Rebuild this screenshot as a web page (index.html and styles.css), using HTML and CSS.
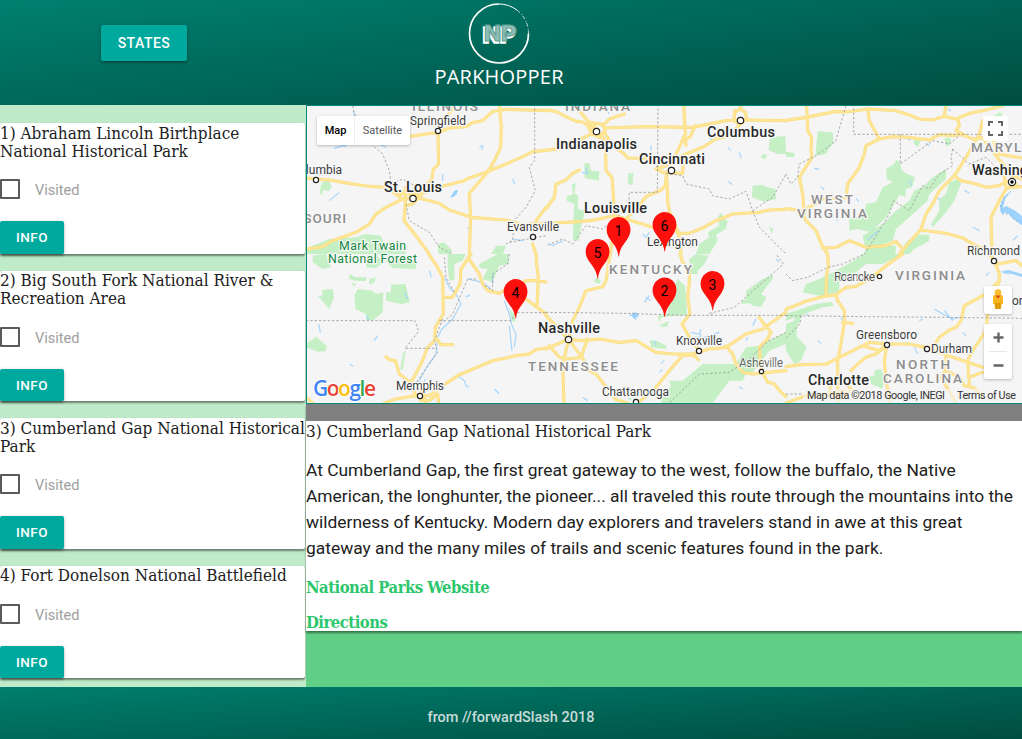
FILE: index.html
```html
<!DOCTYPE html>
<html lang="en">
<head>
<meta charset="utf-8">
<title>Parkhopper</title>
<link rel="stylesheet" href="styles.css">
</head>
<body>
<header class="header">
  <button class="btn btn-states">States</button>
  <svg class="logo" viewBox="0 0 140 92">
    <path class="ring" d="M64 4A29.500 29.500 0 1 0 93.500 33.500"/>
    <path class="ring ring-thin" d="M64 4A29.500 29.500 0 0 1 82 10.100"/>
    <path class="ring ring-worn" d="M82 10.100A29.500 29.500 0 0 1 93.500 33.500"/>
    <text class="np np-shadow" x="47.500" y="43" textLength="33" lengthAdjust="spacingAndGlyphs">NP</text>
    <text class="np np-face" x="49" y="41" textLength="33" lengthAdjust="spacingAndGlyphs">NP</text>
    <text class="brand" x="-.5" y="83.500" textLength="129">PARKHOPPER</text>
  </svg>
</header>
<main class="main">
  <aside class="sidebar">
    <article class="card">
      <h2 class="title"><span>1) Abraham Lincoln Birthplace</span><br><span>National Historical Park</span></h2>
      <label class="visited"><span class="box"></span>Visited</label>
      <button class="btn btn-info">Info</button>
    </article>
    <article class="card">
      <h2 class="title"><span>2) Big South Fork National River &amp;</span><br><span>Recreation Area</span></h2>
      <label class="visited"><span class="box"></span>Visited</label>
      <button class="btn btn-info">Info</button>
    </article>
    <article class="card">
      <h2 class="title"><span>3) Cumberland Gap National Historical</span><br><span>Park</span></h2>
      <label class="visited"><span class="box"></span>Visited</label>
      <button class="btn btn-info">Info</button>
    </article>
    <article class="card">
      <h2 class="title"><span>4) Fort Donelson National Battlefield</span></h2>
      <label class="visited"><span class="box"></span>Visited</label>
      <button class="btn btn-info">Info</button>
    </article>
  </aside>
  <section class="content">
    <div class="map">
      <svg class="map-canvas" viewBox="307 106 715 297">
        <defs>
          <g id="roads">
            <path transform="translate(306 104) scale(.33333)" d="M0 222L70 228 130 238 180 246 240 250 290 285M310 98L360 90 396 86 430 72 480 68 500 56 530 50 560 22 600 16 720 20M396 86L398 180 382 196 378 225 330 275M270 262L330 275 415 245 470 232 490 222 540 205 600 180 650 158 680 143 720 139M580 0L586 70 584 130 560 180 540 210 490 268 494 340 490 450M290 285L340 283 400 298 430 318 495 340 600 348 650 362 720 358M290 285L240 310 210 330 190 360 150 385 80 410 50 428 0 436M298 250L298 300 294 350 330 395 355 430 370 450M720 310L690 350 695 370M680 420L690 450M298 305L320 300 345 275 320 265 285 270M396 86L440 10"/>
            <path transform="translate(546 104) scale(.33333)" d="M0 18L30 22 60 38 90 52 110 54 152 82 178 110 180 200 198 220 206 330M0 139L40 134 60 120 100 108 152 82M100 20L125 50 152 75M170 65L190 45 235 30M130 55L172 62 178 80 160 100 138 90 125 65M175 72L300 68 440 70 540 50 583 48 720 50M178 90L200 125 235 150 245 162 300 163M413 0L418 90 400 130 376 180M350 190L420 150 470 130 510 105 550 95 583 60M567 20L563 50 583 60 602 45 598 25 583 15 565 25M583 10L590 0M448 65L432 100 418 105 420 125M370 178L330 195 350 205 410 208 412 170 376 160M362 205L358 245 345 258 300 278 275 310 240 345M362 215L366 300 372 330 395 380 402 410 405 450M0 358L60 355 110 352 150 347 206 335 240 345 320 370M385 375L395 388 430 388 470 372 510 350 560 330 640 325 670 318 720 316M210 345L200 400 193 450M0 315L25 280 30 240 60 228 80 208 100 198"/>
            <path transform="translate(786 104) scale(.33333)" d="M0 49L60 40 150 22 180 24 250 15 330 20 370 33 400 45 440 48 475 37 510 45 550 28 600 18 650 5M62 5L65 80 77 100 75 140 78 160 40 220 50 270 55 330M475 35L480 5M245 15L250 50 280 105 240 125 235 150 220 190 185 240 180 280 110 285 70 310 50 325M280 105L320 98 370 100 430 108 460 92 500 94 530 92 560 105 600 100M515 45L520 65 510 80 545 98M590 50L580 90 540 160 515 200 505 215 460 260 440 300 420 330 405 375 340 450M505 215L525 230 570 240 600 250 640 245 655 235 680 230M690 240L660 255 640 290 615 340 618 450M590 100L610 130 650 180 680 215 708 225M655 218L660 250 708 248M0 314L40 318 60 350 90 380 110 430 125 450M115 432L150 430 190 410 240 430 300 425 330 412 345 430M405 378L480 388 530 402 580 430 610 440M620 100L635 150 708 162"/>
            <path transform="translate(306 254) scale(.33333)" d="M368 0L395 40 410 70 412 180 388 220 386 260 365 280 345 330 312 390 330 425M412 130L440 130 462 90 465 45 487 12 495 0M487 12L520 60 530 90 545 110 580 118 610 100M640 95L660 80 690 80 720 84M690 0L692 30 697 70 693 158M660 135L720 180M388 250L405 272 440 272M240 308L252 318 268 320 280 360 312 385M235 447L270 435 330 425 370 425 410 395 460 362 560 320 600 312 630 305 670 300 690 287 720 282M340 425L345 440 370 440 395 420 398 447M320 405L345 408 360 447M0 430L20 447"/>
            <path transform="translate(546 254) scale(.33333)" d="M193 0L180 80 170 98 120 110 100 160 80 200 68 255 0 285M10 275L40 310 60 315 110 310M68 257L110 260 160 255 220 265 270 260 330 295 380 300 440 300 490 285 540 280 600 240 650 225 720 175M0 185L68 257M68 257L50 330 54 447M68 257L108 310 130 350 150 360 210 437 245 447M125 255L105 310M412 302L370 350 330 400 275 447M402 0L410 25 430 50 430 85 425 130 432 180 408 210 430 250 460 290M400 303L445 305 458 318M540 275L560 300 570 330 590 355 620 360 720 350M640 190L650 205 675 235 665 255 640 280 642 310 646 350 665 385 685 390 705 415 720 428"/>
            <path transform="translate(786 254) scale(.33333)" d="M125 0L127 40 122 60 120 120M0 166L60 142 110 128 150 122 180 100 210 97 250 75 300 35 350 0M150 122L155 140 175 170 175 205 165 270 155 320 155 447M170 205L200 208M0 338L45 332 120 330 160 310 210 285 250 265 303 270 370 270 420 280 500 310 590 340M303 270L280 290 230 275M303 270L295 320 300 380 312 447M303 275L270 300 240 310 215 330 195 350M608 0L635 30 690 20 708 35M625 20L640 60 640 80 600 120 535 155 525 200 510 220 490 228 460 250 440 280M640 80L605 180 600 230 580 260 560 290 545 320 550 390M550 370L590 355M480 310L480 350 520 370 535 395 560 400 590 425M440 280L410 280M480 345L465 370 510 447M0 447L60 425 140 420 175 410M135 385L175 385 195 405 170 430 130 415Z"/>
          </g>
          <path id="pin" d="M0 26.500C-1.300 17-5 14.500-9 8.500C-15.500-1.500-10-12-.3-13C10-13 15.500-2 9.500 8C6 14 1.500 17 .5 26.500Z"/>
        </defs>
        <rect class="land" x="306" y="105" width="716" height="299"/>
        <g class="forest">
          <path transform="translate(306 104) scale(.33333)" d="M48 235L68 230 78 250 68 262 52 258 48 272 40 266ZM20 425L70 405 150 400 180 390 225 395 232 415 290 415 300 450 0 450 0 440ZM395 420L415 415 440 440 430 450 398 450ZM570 425L600 425 590 450 555 450Z"/>
          <path transform="translate(546 104) scale(.33333)" d="M115 178L130 178 135 200 160 202 158 230 116 222ZM247 208L262 207 260 244 246 240ZM78 240L90 238 85 268 97 275 95 315 118 320 105 370 98 412 80 405 85 300 62 290 62 276 80 272ZM672 100L718 96 720 150 695 150 668 138ZM648 152L662 150 660 165 645 162ZM620 245L650 243 665 250 688 255 690 285 655 293 618 280ZM515 340L525 325 535 345 545 350 540 375 510 392 515 410 490 450 450 450 460 420 490 400 485 385 520 365ZM668 368L682 375 678 390Z"/>
          <path transform="translate(786 104) scale(.33333)" d="M95 82L140 85 143 115 118 150 88 155ZM0 143L25 147 25 160 0 158ZM385 105L408 103 395 130 383 118ZM475 103L492 100 495 118 482 128ZM300 195L325 180 330 168 342 175 347 198 360 208 387 220 378 250 360 255 358 278 340 272 328 295 300 340 255 385 215 375 190 380 190 345 235 330 240 300 270 295 290 250 320 235 303 225ZM480 195L480 225 430 270 425 290 370 340 330 375 320 410 240 440 230 395 290 360 330 320 370 290 385 260 415 245 440 220ZM490 235L520 225 525 240 505 290 480 325 440 370 435 360 460 320 460 285 480 270ZM390 392L430 392 430 410 385 435 370 450 345 450 360 415ZM245 422L330 425 328 450 235 450ZM640 25L650 30 645 40 625 35Z"/>
          <path transform="translate(306 254) scale(.33333)" d="M20 5L60 0 75 40 50 45 20 25ZM180 15L210 0 230 25 260 5 330 5 330 45 260 42 240 20 210 42 180 40ZM48 108L80 105 84 130 70 165 35 125 50 125ZM155 105L200 110 210 120 232 115 230 175 200 200 180 198 180 180 148 165 145 125ZM255 92L298 90 312 145 285 150 240 140 240 115 255 115ZM130 60L150 70 183 70 178 82 150 80 130 75ZM190 75L210 70 205 85 190 92ZM135 85L150 90 145 98ZM0 270L30 248 62 275 60 292 35 293 0 280ZM425 0L480 0 470 20 445 30 445 78 430 80 425 40ZM520 30L575 0 608 0 608 30 580 35 560 85 530 75 545 45 520 42ZM610 165L625 180 628 205 618 200ZM300 285L290 350 283 345 290 300Z"/>
          <path transform="translate(546 254) scale(.33333)" d="M430 15L450 0 488 5 475 30 455 50 455 60 435 60ZM395 75L418 95 423 182 345 190 340 215 368 200 365 218 345 218 335 185 365 180 372 120ZM155 68L165 82 160 90 142 82ZM600 110L650 75 682 62 680 75 645 120 662 130 645 158 620 155 610 148 585 150 588 138 600 138ZM312 258L335 262 360 275 362 285 315 280ZM370 380L410 380 470 330 570 330 600 280 640 275 720 235 720 270 670 290 620 355 600 360 590 380 550 380 500 447 345 447 350 410 375 400ZM245 430L258 435 252 442Z"/>
          <path transform="translate(786 254) scale(.33333)" d="M0 210L25 200 30 180 50 180 35 215 30 245 62 280 45 320 25 330 0 290ZM60 90L100 75 150 50 220 10 230 0 350 0 290 30 240 30 210 55 190 65 160 85 160 115 100 125 50 115ZM90 150L135 143 145 155 110 160 0 200 0 180ZM265 350L285 345 295 370 290 405 255 390 250 365 265 365Z"/>
        </g>
        <g class="water">
          <path transform="translate(306 104) scale(.33333)" d="M142 20L147 40M85 133L110 125 118 128 122 118M120 85L132 80M210 100L222 120 240 130M410 210L410 230M450 260L438 278 450 270 455 258M520 130L530 125 528 138M70 290L100 265M620 225L626 240M485 370L492 380M620 405L650 410"/>
          <path transform="translate(546 104) scale(.33333)" d="M185 10L188 30M490 100L500 110M545 130L555 140M580 145L585 162M315 125L315 140M547 232L558 242M108 205L125 208 118 190M250 290L255 298M10 420L20 425 50 410M290 390L300 400 310 385"/>
          <path transform="translate(786 104) scale(.33333)" d="M85 193L100 196M105 248L115 258M210 284L218 292M365 105L375 108M420 118L430 125M485 15L495 22M535 258L550 268M560 370L582 380M150 345L155 350M370 230L378 245M245 407L278 380M455 280L462 290M695 395L680 410M615 380L612 400"/>
          <path transform="translate(306 254) scale(.33333)" d="M205 260L215 245M38 210L43 235M295 115L305 135M370 50L376 70M480 128L492 124M350 395L358 375M132 330L142 338M455 365L475 380 480 395 490 400M565 405L580 420M595 140L610 180 618 215 630 240 625 280M610 215L618 290M415 70L430 100 450 120 465 150 440 195 408 225 395 250 390 300 365 335 345 370 330 400M183 185L187 198M485 75L530 85 555 105M560 90L560 60"/>
          <path transform="translate(546 254) scale(.33333)" d="M250 185L278 180M260 175L270 198M295 145L310 125M298 130L315 140M345 330L355 318M340 355L350 347M435 235L460 240 465 225M440 250L475 250 520 235M458 262L465 240M620 215L630 195M600 260L605 250M690 15L700 25M495 185L500 178M330 275L325 260M125 440L110 430M580 398L590 405"/>
          <path transform="translate(786 254) scale(.33333)" d="M445 165L470 180 500 195 520 190M475 170L500 200M70 185L60 180M95 260L105 268M455 250L468 245M530 235L540 245M505 290L500 280M165 190L170 200M385 280L395 300M610 55L600 65M650 55L670 60M400 200L410 195"/>
        </g>
        <path class="lake" d="M1011 191L1004 197 1000 206 1001 213 1008 213 1013 219 1022 225 1022 216 1014 210 1006 206 1003 208 1005 199ZM1000 272L1008 270 1022 274 1022 277 1008 273ZM454 191L450 198 455 196 458 190ZM631 315L636 312 639 316 634 319Z"/>
        <use class="road-edge" href="#roads"/>
        <use class="road" href="#roads"/>
        <g class="border">
          <path transform="translate(306 104) scale(.33333)" d="M686 0L686 170 670 190 688 260 660 310 625 350 620 410 600 420M140 5L145 30 165 45M195 120L230 150 250 200 255 240 290 225 325 245M300 300L310 350 370 385 400 430 440 450M610 415L665 405 720 395"/>
          <path transform="translate(546 104) scale(.33333)" d="M336 0L334 265 250 265 248 310 170 375 120 365 80 420 50 405 0 425M336 190L300 165M360 208L410 215 420 240 490 255 500 275 550 285 600 262 610 290 620 320 680 280 720 210M620 320L640 370 720 450"/>
          <path transform="translate(786 104) scale(.33333)" d="M180 5L155 90 150 110 90 155 40 180 35 220 15 240 0 210M203 0L203 91 708 91M343 91L343 180 440 110 490 120 520 95M500 135L495 165 500 185 460 210 430 255 410 245 370 320 322 290 310 330 280 380 235 450M500 135L550 180 600 160 640 200"/>
          <path class="shore" transform="translate(786 104) scale(.33333)" d="M675 262L650 285 643 310 650 330 670 330 690 350 708 362"/>
          <path transform="translate(306 254) scale(.33333)" d="M0 200L327 200 338 232 297 283 385 283M415 10L420 70 445 115M400 200L615 200 630 176 720 176M410 195L385 260 395 295 320 400M510 75L485 75 455 145 440 180 405 210M610 0L605 30 560 60 560 110 530 90"/>
          <path transform="translate(546 254) scale(.33333)" d="M0 175L240 178 420 184 720 184M490 178L565 160 610 120 690 50 712 30 690 0M720 235L665 262 610 315 550 355 460 360 370 447"/>
          <path transform="translate(786 254) scale(.33333)" d="M0 60L20 80 65 70 125 40 170 30 235 0M0 185L250 188 470 190 708 193M45 185L42 210 0 252M0 420L50 420"/>
        </g>
        <g class="state">
          <text x="412" y="111" textLength="66">ILLINOIS</text><text x="565" y="111" textLength="65">INDIANA</text>
          <text x="294" y="223" textLength="52">SSOURI</text><text x="609" y="274" textLength="83">KENTUCKY</text>
          <text x="528" y="371" textLength="90">TENNESSEE</text><text x="811" y="204" textLength="42">WEST</text>
          <text x="797" y="218" textLength="70">VIRGINIA</text><text x="895" y="280" textLength="70">VIRGINIA</text>
          <text x="896" y="369" textLength="54">NORTH</text><text x="883" y="383" textLength="79">CAROLINA</text>
          <text x="971" y="152" textLength="82">MARYLAND</text>
        </g>
        <g class="park"><text x="339" y="250" textLength="67">Mark Twain</text><text x="328" y="263" textLength="89">National Forest</text></g>
        <g class="city">
          <text x="384" y="192" textLength="58">St. Louis</text><text x="556" y="149" textLength="81">Indianapolis</text>
          <text x="707" y="137" textLength="68">Columbus</text><text x="639" y="164" textLength="66">Cincinnati</text>
          <text x="584" y="213" textLength="63">Louisville</text><text x="538" y="333" textLength="62">Nashville</text>
          <text x="808" y="385" textLength="61">Charlotte</text><text x="972" y="175" textLength="77">Washington</text>
        </g>
        <g class="town">
          <text x="410" y="125" textLength="56">Springfield</text><text x="299" y="174">olumbia</text>
          <text x="507" y="231" textLength="52">Evansville</text><text x="647" y="246" textLength="51">Lexington</text>
          <text x="396" y="390" textLength="48">Memphis</text><text x="676" y="345" textLength="46">Knoxville</text>
          <text x="739" y="367" textLength="44" opacity=".75">Asheville</text><text x="602" y="396" textLength="67">Chattanooga</text>
          <text x="967" y="255" textLength="53">Richmond</text><text x="834" y="281" textLength="41" opacity=".85">Roanoke</text>
          <text x="856" y="339" textLength="61">Greensboro</text><text x="931" y="353" textLength="41">Durham</text>
          <text x="1012" y="305">or</text>
        </g>
        <g class="dot">
          <circle cx="438" cy="131" r="2.600"/><circle cx="316" cy="180" r="2.600"/><circle cx="413" cy="198.500" r="3.200"/>
          <circle cx="596.500" cy="131.500" r="3.200"/><circle cx="740.500" cy="120.500" r="3.200"/><circle cx="671.500" cy="170.500" r="3.200"/>
          <circle cx="533" cy="237" r="2.600"/><circle cx="420" cy="396" r="2.600"/><circle cx="568.500" cy="339.500" r="3.200"/>
          <circle cx="699" cy="351" r="2.600"/><circle cx="761.500" cy="371.500" r="2.200"/><circle cx="636" cy="402" r="2.600"/>
          <circle cx="994" cy="261" r="2.600"/><circle cx="879.500" cy="276.500" r="2.200"/><circle cx="887" cy="345" r="2.600"/>
          <circle cx="927" cy="349" r="2.600"/><circle cx="1012" cy="182" r="3.600"/>
        </g>
        <circle cx="1012" cy="182" r="1.700"/>
        <g class="pins">
          <use href="#pin" x="618.500" y="230"/><use href="#pin" x="597.500" y="252"/><use href="#pin" x="664.500" y="225"/>
          <use href="#pin" x="664.500" y="290.500"/><use href="#pin" x="712.500" y="284"/><use href="#pin" x="515.500" y="292"/>
        </g>
        <g class="pin-label">
          <text x="618.500" y="236">1</text><text x="597.500" y="258">5</text><text x="664.500" y="231">6</text>
          <text x="664.500" y="296">2</text><text x="712.500" y="290">3</text><text x="515.500" y="298">4</text>
        </g>
        <text class="google" x="313" y="396" textLength="63"><tspan fill="#4285f4">G</tspan><tspan fill="#ea4335">o</tspan><tspan fill="#fbbc05">o</tspan><tspan fill="#4285f4">g</tspan><tspan fill="#34a853">l</tspan><tspan fill="#ea4335">e</tspan></text>
        <rect class="legal-bg" x="803" y="389" width="219" height="14"/>
        <g class="legal"><text x="807" y="399" textLength="138">Map data ©2018 Google, INEGI</text><text x="957" y="399" textLength="59">Terms of Use</text></g>
      </svg>
      <div class="map-type"><span class="type-map">Map</span><span class="type-sat">Satellite</span></div>
      <div class="control fullscreen"><svg viewBox="0 0 25 25"><path d="M6 10V6H10M15 6H19V10M19 15V19H15M10 19H6V15"/></svg></div>
      <div class="control pegman"><svg viewBox="0 0 28 28"><path fill="#f9b522" d="M9 11Q9 9 11 9H17Q19 9 19 11V18H17.500L17 23H11L10.500 18H9Z"/><path fill="#d99000" d="M11.500 17H13.500V23H11.500ZM14.500 17H16.500V23H14.500Z"/><circle cx="14" cy="6.500" r="3.300" fill="#fbbd2d"/><path fill="#d5441c" d="M11.500 9.500H16.500L14 12.500Z"/></svg></div>
      <div class="control zoom"><svg viewBox="0 0 28 55"><path class="divider" d="M5 27.500H23"/><path d="M9.500 13.500H19.500M14.500 8.500V18.500M9.500 41.500H19.500"/></svg></div>
    </div>
    <article class="detail">
      <h2 class="title"><span>3) Cumberland Gap National Historical Park</span></h2>
      <p class="description"><span>At Cumberland Gap, the first great gateway to the west, follow the buffalo, the Native</span><br><span>American, the longhunter, the pioneer... all traveled this route through the mountains into the</span><br><span>wilderness of Kentucky. Modern day explorers and travelers stand in awe at this great</span><br><span>gateway and the many miles of trails and scenic features found in the park.</span></p>
      <a class="link">National Parks Website</a>
      <a class="link">Directions</a>
    </article>
  </section>
</main>
<footer class="footer">from //forwardSlash 2018</footer>
</body>
</html>
```
FILE: styles.css
```css
* { box-sizing: border-box; }
body { margin: 0; width: 1022px; height: 739px; overflow: hidden; display: flex; flex-direction: column; font-family: Roboto, "Liberation Sans", sans-serif; color: #212121; }
.header { height: 105px; flex: none; display: flex; align-items: flex-start; background: linear-gradient(173deg, #008070, #004d40); }
.btn { border: 0; padding: 0; background: #00a99d; color: #fff; border-radius: 2px; font: 500 14px/36px Roboto, sans-serif; letter-spacing: .5px; text-transform: uppercase; box-shadow: 0 2px 2px rgba(0,0,0,.2), 0 1px 4px rgba(0,0,0,.18); }
.btn-states { width: 86px; height: 36px; margin: 25px 0 0 101px; }
.logo { width: 140px; height: 92px; margin-left: 248px; overflow: visible; }
.ring { fill: none; stroke: #fff; stroke-width: 1.7; }
.ring-thin { stroke-width: 1; }
.ring-worn { stroke-width: 1; stroke-dasharray: 4 2 1 1; opacity: .75; }
.np { font: 900 22px Roboto, sans-serif; stroke-width: 1.6; }
.np-shadow { fill: #fff; stroke: #fff; }
.np-face { fill: #8fbdb5; stroke: #5fa297; stroke-width: 1; }
.brand { font: 400 20px "Open Sans", sans-serif; fill: #fff; }
.main { height: 582px; flex: none; display: flex; }
.sidebar { width: 306px; padding: 18px 1px 0 0; background: #c0ebca; display: flex; flex-direction: column; gap: 17px; }
.card { flex: none; background: #fff; border-radius: 2px; box-shadow: 0 1.500px 2px rgba(0,0,0,.45); display: flex; flex-direction: column; align-items: flex-start; }
.title { margin: 0; font: 400 17px/18px "Roboto Slab", "DejaVu Serif Condensed", "DejaVu Serif", serif; font-stretch: condensed; letter-spacing: 0; white-space: nowrap; }
.title span { position: relative; top: .5px; }
.visited { display: flex; align-items: flex-start; margin-top: 20px; height: 42px; color: #9e9e9e; font-size: 14.5px; line-height: 24px; }
.box { width: 20px; height: 20px; border: 2px solid #5a5a5a; border-radius: 1px; margin-right: 15px; }
.btn-info { width: 64px; height: 32.600px; line-height: 32.600px; font-size: 13.5px; }
.content { width: 716px; background: #61d086; }
.map { position: relative; height: 299px; border: 1px solid #00897b; border-right: 0; }
.map-canvas { display: block; width: 715px; height: 297px; font-family: Roboto, sans-serif; }
.land { fill: #f5f5f5; }
.forest { fill: #c5f0c5; }
.water { fill: none; stroke: #a5d5fb; stroke-width: 3.5; stroke-linejoin: round; }
.lake { fill: #9dd2fc; }
.road, .road-edge { fill: none; stroke-linejoin: round; stroke-linecap: round; }
.road-edge { stroke: #fadc80; stroke-width: 9.5; }
.road { stroke: #ffe694; stroke-width: 6; }
.border { fill: none; stroke: #9b9b9b; stroke-width: 2.6; stroke-dasharray: 7 6; }
.shore { stroke: #7fb6e0; }
.map-canvas text { paint-order: stroke; }
.state, .park, .city, .town { stroke: #f8f8f8; stroke-width: 2.5; stroke-linejoin: round; }
.state { font-size: 13.5px; font-weight: 500; fill: #8d8d8d; }
.park { font-size: 12.3px; fill: #12883c; }
.city { font-size: 14.4px; font-weight: 500; fill: #272727; }
.town { font-size: 12px; fill: #3b3b3b; }
.dot { fill: #fff; stroke: #222; stroke-width: 1.2; }
.pins { fill: #fc100b; }
.pin-label { font-size: 14px; text-anchor: middle; fill: #000; }
.google { font: 600 21px "Open Sans", sans-serif; stroke: #fff; stroke-width: 2; }
.legal-bg { fill: #f5f5f5; opacity: .65; }
.legal { font-size: 10.8px; fill: #333; }
.map-type { position: absolute; left: 10px; top: 10px; display: flex; width: 93px; height: 29px; border-radius: 2px; background: #fff; box-shadow: 0 1px 3px rgba(0,0,0,.25); font-size: 11px; line-height: 29px; text-align: center; }
.type-map { width: 38px; font-weight: 500; color: #000; border-right: 1px solid #eee; }
.type-sat { flex: 1; color: #565656; }
.control { position: absolute; background: #fff; border-radius: 2px; box-shadow: 0 1px 3px rgba(0,0,0,.25); }
.control svg { display: block; fill: none; stroke: none; }
.fullscreen { left: 676px; top: 10px; width: 25px; height: 25px; box-shadow: none; }
.fullscreen svg { stroke: #666; stroke-width: 2; }
.pegman { left: 677px; top: 180px; width: 28px; height: 28px; }
.zoom { left: 677px; top: 218px; width: 28px; height: 55px; }
.zoom svg { stroke: #666; stroke-width: 2.4; }
.zoom .divider { stroke: #e6e6e6; stroke-width: 1; }
.detail { height: 227px; border-top: 17px solid #808080; background: #fff; box-shadow: 0 1.500px 2px rgba(0,0,0,.45); }
.description { margin: 18px 0 17px; font-size: 17.400px; line-height: 26px; white-space: nowrap; color: #212121; }
.link { display: block; height: 18px; margin-bottom: 17px; font: 700 16.5px/19px "Roboto Slab", "DejaVu Serif Condensed", "DejaVu Serif", serif; font-stretch: condensed; letter-spacing: -.5px; color: #2cc66d; }
.footer { height: 52px; flex: none; text-align: center; line-height: 62px; font-size: 14.500px; font-weight: 500; color: #c9dcd9; background: linear-gradient(176deg, #007f6e, #004d40); }
```
